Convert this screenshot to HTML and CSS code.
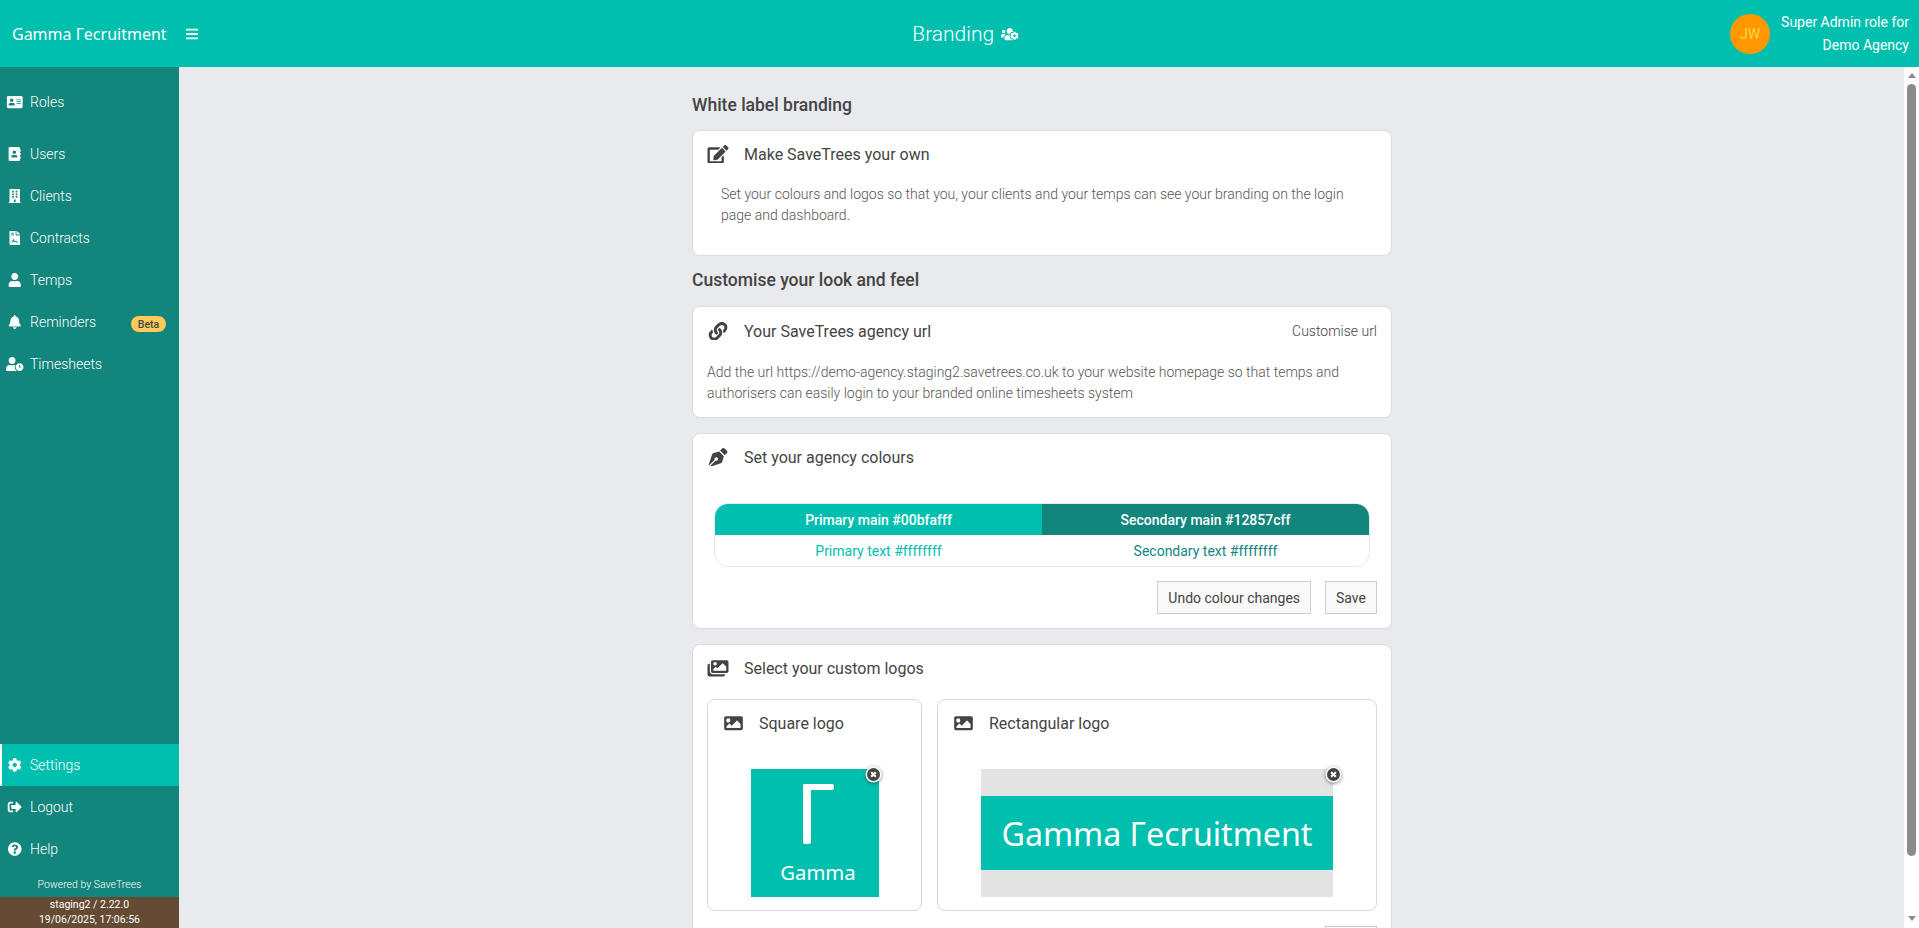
FILE: index.html
```html
<!DOCTYPE html>
<html lang="en">
<head>
    <meta charset="UTF-8">
    <meta name="viewport" content="width=device-width, initial-scale=1.0">
    <title>Branding</title>
    <link rel="stylesheet" href="styles.css">
</head>
<body>
    <svg class="defs" width="0" height="0">
        <symbol id="i-image" viewBox="0 0 512 512"><path d="M464 448H48c-26.510 0-48-21.490-48-48V112c0-26.510 21.490-48 48-48h416c26.510 0 48 21.490 48 48v288c0 26.510-21.490 48-48 48zM112 120c-30.928 0-56 25.072-56 56s25.072 56 56 56 56-25.072 56-56-25.072-56-56-56zM64 384h384V272l-87.515-87.515c-4.686-4.686-12.284-4.686-16.971 0L208 320l-55.515-55.515c-4.686-4.686-12.284-4.686-16.971 0L64 336v48z"/></symbol>
    </svg>

    <header class="topbar">
        <div class="brand">
            <span class="brand-name">Gamma Гecruitment</span>
            <svg class="burger" viewBox="0 0 448 512"><path d="M16 132h416c8.837 0 16-7.163 16-16V76c0-8.837-7.163-16-16-16H16C7.163 60 0 67.163 0 76v40c0 8.837 7.163 16 16 16zm0 160h416c8.837 0 16-7.163 16-16v-40c0-8.837-7.163-16-16-16H16c-8.837 0-16 7.163-16 16v40c0 8.837 7.163 16 16 16zm0 160h416c8.837 0 16-7.163 16-16v-40c0-8.837-7.163-16-16-16H16c-8.837 0-16 7.163-16 16v40c0 8.837 7.163 16 16 16z"/></svg>
        </div>
        <div class="page-title">
            Branding
            <svg class="title-icon" viewBox="0 0 640 512"><path d="M610.500 341.300c2.600-14.100 2.600-28.500 0-42.600l25.800-14.900c3-1.700 4.300-5.200 3.300-8.500-6.700-21.500-18.200-41-33.200-57.400-2.300-2.500-6-3.100-9-1.400l-25.800 14.900c-10.900-9.300-23.400-16.500-36.900-21.300v-29.800c0-3.400-2.400-6.400-5.700-7.100-22.300-5-45-4.800-66.200 0-3.300.7-5.700 3.700-5.700 7.100v29.800c-13.500 4.800-26 12-36.900 21.300l-25.800-14.900c-2.900-1.700-6.700-1.100-9 1.400-15 16.400-26.500 35.900-33.200 57.400-1 3.300.4 6.800 3.300 8.500l25.800 14.900c-2.600 14.100-2.600 28.500 0 42.600l-25.800 14.900c-3 1.700-4.300 5.200-3.300 8.500 6.700 21.500 18.200 40.900 33.200 57.400 2.300 2.500 6 3.100 9 1.400l25.800-14.900c10.900 9.300 23.400 16.500 36.900 21.300v29.800c0 3.400 2.400 6.400 5.700 7.100 22.300 5 45 4.800 66.200 0 3.300-.7 5.700-3.700 5.700-7.100v-29.800c13.500-4.800 26-12 36.900-21.300l25.800 14.900c2.900 1.700 6.700 1.100 9-1.400 15-16.400 26.500-35.900 33.200-57.400 1-3.300-.4-6.800-3.300-8.500l-25.800-14.900zM496 368.500c-26.800 0-48.500-21.800-48.500-48.500s21.800-48.500 48.500-48.500 48.500 21.800 48.500 48.500-21.700 48.500-48.500 48.500zM96 224c35.300 0 64-28.700 64-64s-28.700-64-64-64-64 28.700-64 64 28.700 64 64 64zm224 32c1.900 0 3.700-.5 5.600-.6 8.300-21.700 20.500-42.100 36.300-59.200 7.400-8 17.900-12.600 28.900-12.600 6.900 0 13.700 1.800 19.600 5.300l7.900 4.600c.8-.5 1.600-.9 2.400-1.400 7-14.600 11.200-30.800 11.200-48 0-61.900-50.100-112-112-112S208 82.100 208 144c0 61.900 50.100 112 112 112zm105.200 194.500c-2.300-1.200-4.600-2.600-6.800-3.900-8.200 4.800-15.300 9.800-27.500 9.800-10.900 0-21.400-4.600-28.900-12.600-18.300-19.800-32.300-43.900-40.200-69.600-10.700-34.500 24.900-49.700 25.800-50.300-.1-2.600-.1-5.200 0-7.800l-7.900-4.600c-3.800-2.200-7-5-9.800-8.100-3.300.2-6.500.6-9.800.6-24.600 0-47.600-6-68.500-16h-8.300C179.600 288 128 339.600 128 403.200V432c0 26.500 21.500 48 48 48h255.400c-3.700-6-6.200-12.800-6.200-20.300v-9.200zM173.100 274.600C161.500 263.100 145.600 256 128 256H64c-35.300 0-64 28.700-64 64v32c0 17.700 14.300 32 32 32h65.900c6.300-47.400 34.900-87.300 75.200-109.400z"/></svg>
        </div>
        <div class="account">
            <div class="avatar">JW</div>
            <div class="account-text">
                <div>Super Admin role for</div>
                <div>Demo Agency</div>
            </div>
        </div>
    </header>

    <div class="layout">
        <nav class="sidebar">
            <ul class="nav-top">
                <li class="nav-roles">
                    <svg class="nav-icon" viewBox="0 0 576 512"><path d="M528 32H48C21.500 32 0 53.500 0 80v352c0 26.500 21.500 48 48 48h480c26.500 0 48-21.500 48-48V80c0-26.500-21.500-48-48-48zm-352 96c35.300 0 64 28.700 64 64s-28.700 64-64 64-64-28.700-64-64 28.700-64 64-64zm112 236.800c0 10.600-10 19.200-22.400 19.200H86.400C74 384 64 375.400 64 364.800v-19.200c0-31.800 30.100-57.600 67.200-57.600h5c12.300 5.100 25.700 8 39.800 8s27.600-2.900 39.800-8h5c37.100 0 67.200 25.800 67.200 57.600v19.200zM512 312c0 4.400-3.600 8-8 8H360c-4.400 0-8-3.600-8-8v-16c0-4.400 3.600-8 8-8h144c4.400 0 8 3.600 8 8v16zm0-64c0 4.400-3.600 8-8 8H360c-4.400 0-8-3.600-8-8v-16c0-4.400 3.600-8 8-8h144c4.400 0 8 3.600 8 8v16zm0-64c0 4.400-3.600 8-8 8H360c-4.400 0-8-3.600-8-8v-16c0-4.400 3.600-8 8-8h144c4.400 0 8 3.600 8 8v16z"/></svg>
                    Roles
                </li>
                <li>
                    <svg class="nav-icon" viewBox="0 0 448 512"><path d="M436 160c6.600 0 12-5.400 12-12v-40c0-6.600-5.400-12-12-12h-20V48c0-26.500-21.500-48-48-48H48C21.500 0 0 21.500 0 48v416c0 26.500 21.500 48 48 48h320c26.500 0 48-21.500 48-48v-48h20c6.600 0 12-5.400 12-12v-40c0-6.600-5.400-12-12-12h-20v-64h20c6.600 0 12-5.400 12-12v-40c0-6.600-5.400-12-12-12h-20v-64h20zm-228-32c35.300 0 64 28.700 64 64s-28.700 64-64 64-64-28.700-64-64 28.700-64 64-64zm112 236.800c0 10.600-10 19.200-22.400 19.200H118.400C106 384 96 375.400 96 364.800v-19.200c0-31.800 30.100-57.600 67.200-57.600h5c12.300 5.100 25.700 8 39.800 8s27.600-2.900 39.800-8h5c37.100 0 67.200 25.800 67.200 57.600v19.200z"/></svg>
                    Users
                </li>
                <li>
                    <svg class="nav-icon" viewBox="0 0 448 512"><path d="M436 480h-20V24c0-13.255-10.745-24-24-24H56C42.745 0 32 10.745 32 24v456H12c-6.627 0-12 5.373-12 12v20h448v-20c0-6.627-5.373-12-12-12zM128 76c0-6.627 5.373-12 12-12h40c6.627 0 12 5.373 12 12v40c0 6.627-5.373 12-12 12h-40c-6.627 0-12-5.373-12-12V76zm0 96c0-6.627 5.373-12 12-12h40c6.627 0 12 5.373 12 12v40c0 6.627-5.373 12-12 12h-40c-6.627 0-12-5.373-12-12v-40zm52 148h-40c-6.627 0-12-5.373-12-12v-40c0-6.627 5.373-12 12-12h40c6.627 0 12 5.373 12 12v40c0 6.627-5.373 12-12 12zm76 160h-64v-84c0-6.627 5.373-12 12-12h40c6.627 0 12 5.373 12 12v84zm64-172c0 6.627-5.373 12-12 12h-40c-6.627 0-12-5.373-12-12v-40c0-6.627 5.373-12 12-12h40c6.627 0 12 5.373 12 12v40zm0-96c0 6.627-5.373 12-12 12h-40c-6.627 0-12-5.373-12-12v-40c0-6.627 5.373-12 12-12h40c6.627 0 12 5.373 12 12v40zm0-96c0 6.627-5.373 12-12 12h-40c-6.627 0-12-5.373-12-12V76c0-6.627 5.373-12 12-12h40c6.627 0 12 5.373 12 12v40z"/></svg>
                    Clients
                </li>
                <li>
                    <svg class="nav-icon" viewBox="0 0 384 512"><path d="M224 136V0H24C10.700 0 0 10.700 0 24v464c0 13.300 10.700 24 24 24h336c13.300 0 24-10.700 24-24V160H248c-13.200 0-24-10.800-24-24zM64 72c0-4.420 3.580-8 8-8h80c4.420 0 8 3.580 8 8v16c0 4.420-3.580 8-8 8H72c-4.420 0-8-3.580-8-8V72zm0 64c0-4.420 3.580-8 8-8h80c4.420 0 8 3.580 8 8v16c0 4.420-3.580 8-8 8H72c-4.420 0-8-3.580-8-8v-16zm192.810 248H304c8.840 0 16 7.160 16 16s-7.160 16-16 16h-47.190c-16.450 0-31.270-9.140-38.620-23.880-2.950-5.920-8.090-6.520-10.190-6.520s-7.240.590-10.050 6.220l-7.670 15.340a15.990 15.990 0 0 1-14.310 8.840c-.38 0-.75-.020-1.120-.050-6.450-.45-12-4.750-14.030-10.890L144 354.590l-10.610 31.880c-5.890 17.660-22.380 29.530-41 29.530H80c-8.840 0-16-7.160-16-16s7.160-16 16-16h12.390c4.830 0 9.110-3.080 10.640-7.660l18.190-54.640c3.300-9.810 12.440-16.410 22.780-16.410s19.480 6.590 22.770 16.410l13.880 41.640c19.770-16.190 54.050-9.700 66 14.160 2.020 4.060 5.970 6.500 10.160 6.500zM377 105L279.100 7c-4.500-4.500-10.600-7-17-7H256v128h128v-6.100c0-6.300-2.500-12.400-7-16.900z"/></svg>
                    Contracts
                </li>
                <li>
                    <svg class="nav-icon" viewBox="0 0 448 512"><path d="M224 256c70.700 0 128-57.300 128-128S294.700 0 224 0 96 57.300 96 128s57.300 128 128 128zm89.600 32h-16.700c-22.200 10.200-46.900 16-72.900 16s-50.600-5.800-72.900-16h-16.700C60.200 288 0 348.200 0 422.400V464c0 26.500 21.500 48 48 48h352c26.500 0 48-21.500 48-48v-41.600c0-74.200-60.200-134.400-134.400-134.400z"/></svg>
                    Temps
                </li>
                <li>
                    <svg class="nav-icon" viewBox="0 0 448 512"><path d="M224 512c35.320 0 63.970-28.650 63.970-64H160.030c0 35.350 28.650 64 63.970 64zm215.390-149.710c-19.320-20.760-55.470-51.990-55.470-154.290 0-77.700-54.480-139.900-127.940-155.160V32c0-17.670-14.320-32-31.980-32s-31.980 14.330-31.980 32v20.840C118.560 68.100 64.080 130.300 64.080 208c0 102.300-36.150 133.530-55.470 154.290-6 6.450-8.660 14.160-8.610 21.710.11 16.400 12.980 32 32.100 32h383.800c19.120 0 32-15.600 32.100-32 .05-7.550-2.610-15.270-8.610-21.710z"/></svg>
                    Reminders
                    <span class="beta">Beta</span>
                </li>
                <li>
                    <svg class="nav-icon" viewBox="0 0 640 512"><path d="M496 224c-79.600 0-144 64.400-144 144s64.400 144 144 144 144-64.400 144-144-64.400-144-144-144zm64 150.300c0 5.300-4.400 9.700-9.700 9.700h-60.600c-5.300 0-9.700-4.400-9.700-9.700v-76.600c0-5.300 4.400-9.700 9.700-9.700h12.600c5.300 0 9.700 4.400 9.700 9.700V352h38.300c5.300 0 9.700 4.400 9.700 9.700v12.600zM320 368c0-27.800 7.700-53.800 20.900-76.100-8-2.200-16.300-3.900-24.900-3.900h-16.700c-22.200 10.200-46.900 16-72.900 16s-50.600-5.800-72.900-16h-16.700C60.200 288 0 348.200 0 422.400V464c0 26.500 21.500 48 48 48h347.100c-45.300-31.900-75.100-84.400-75.100-144zm-96-112c70.700 0 128-57.300 128-128S294.700 0 224 0 96 57.300 96 128s57.300 128 128 128z"/></svg>
                    Timesheets
                </li>
            </ul>
            <ul class="nav-bottom">
                <li class="active">
                    <svg class="nav-icon" viewBox="0 0 512 512"><path d="M487.400 315.700l-42.600-24.600c4.300-23.200 4.300-47 0-70.200l42.600-24.600c4.900-2.800 7.100-8.600 5.500-14-11.100-35.600-30-67.800-54.700-94.600-3.800-4.100-10-5.100-14.800-2.300L380.800 110c-17.900-15.400-38.500-27.300-60.800-35.100V25.800c0-5.600-3.900-10.500-9.400-11.700-36.700-8.200-74.300-7.800-109.200 0-5.500 1.200-9.400 6.100-9.400 11.700V75c-22.200 7.900-42.800 19.800-60.800 35.100L88.700 85.500c-4.900-2.800-11-1.900-14.800 2.300-24.700 26.700-43.600 58.900-54.700 94.600-1.700 5.400.6 11.200 5.500 14L67.300 221c-4.300 23.200-4.300 47 0 70.200l-42.600 24.600c-4.900 2.800-7.100 8.600-5.500 14 11.100 35.600 30 67.800 54.700 94.600 3.800 4.100 10 5.100 14.800 2.300l42.600-24.600c17.900 15.400 38.500 27.300 60.800 35.100v49.200c0 5.600 3.900 10.500 9.400 11.700 36.700 8.200 74.300 7.800 109.200 0 5.500-1.200 9.400-6.100 9.400-11.700v-49.200c22.200-7.900 42.800-19.800 60.800-35.100l42.600 24.600c4.900 2.800 11 1.900 14.800-2.300 24.700-26.700 43.600-58.900 54.700-94.600 1.500-5.500-.7-11.300-5.600-14.100zM256 336c-44.100 0-80-35.900-80-80s35.900-80 80-80 80 35.900 80 80-35.900 80-80 80z"/></svg>
                    Settings
                </li>
                <li>
                    <svg class="nav-icon" viewBox="0 0 512 512"><path d="M497 273L329 441c-15 15-41 4.500-41-17v-96H152c-13.300 0-24-10.700-24-24v-96c0-13.300 10.700-24 24-24h136V88c0-21.400 25.900-32 41-17l168 168c9.300 9.400 9.300 24.600 0 34zM192 436v-40c0-6.600-5.400-12-12-12H96c-17.700 0-32-14.300-32-32V160c0-17.700 14.300-32 32-32h84c6.600 0 12-5.400 12-12V76c0-6.600-5.400-12-12-12H96c-53 0-96 43-96 96v192c0 53 43 96 96 96h84c6.600 0 12-5.400 12-12z"/></svg>
                    Logout
                </li>
                <li>
                    <svg class="nav-icon" viewBox="0 0 512 512"><path d="M504 256c0 136.997-111.043 248-248 248S8 392.997 8 256C8 119.083 119.043 8 256 8s248 111.083 248 248zM262.655 90c-54.497 0-89.255 22.957-116.549 63.758-3.536 5.286-2.353 12.415 2.715 16.258l34.699 26.310c5.205 3.947 12.621 3.008 16.665-2.122 17.864-22.658 30.113-35.797 57.303-35.797 20.429 0 45.698 13.148 45.698 32.958 0 14.976-12.363 22.667-32.534 33.976C247.128 238.528 216 254.941 216 296v4c0 6.627 5.373 12 12 12h56c6.627 0 12-5.373 12-12v-1.333c0-28.462 83.186-29.647 83.186-106.667 0-58.002-60.165-102-116.531-102zM256 338c-25.365 0-46 20.635-46 46 0 25.364 20.635 46 46 46s46-20.636 46-46c0-25.365-20.635-46-46-46z"/></svg>
                    Help
                </li>
            </ul>
            <div class="powered">Powered by SaveTrees</div>
            <div class="build">
                <div>staging2 / 2.22.0</div>
                <div>19/06/2025, 17:06:56</div>
            </div>
        </nav>

        <main class="content">
            <div class="column">
                <h2 class="section-title first">White label branding</h2>
                <section class="card card-intro">
                    <div class="card-head">
                        <svg class="card-icon" viewBox="0 0 576 512"><path d="M402.600 83.200l90.200 90.200c3.800 3.800 3.800 10 0 13.800L274.400 405.600l-92.800 10.300c-12.400 1.400-22.900-9.100-21.500-21.500l10.300-92.800L388.800 83.200c3.800-3.800 10-3.800 13.800 0zm162-22.900l-48.800-48.800c-15.200-15.200-39.900-15.200-55.200 0l-35.400 35.400c-3.800 3.800-3.800 10 0 13.800l90.200 90.200c3.800 3.800 10 3.800 13.800 0l35.400-35.400c15.200-15.300 15.200-40 0-55.200zM384 346.200V448H64V128h229.800c3.200 0 6.200-1.300 8.500-3.500l40-40c7.600-7.600 2.200-20.500-8.500-20.500H48C21.500 64 0 85.500 0 112v352c0 26.500 21.500 48 48 48h352c26.500 0 48-21.500 48-48V306.200c0-10.700-12.900-16-20.500-8.500l-40 40c-2.200 2.300-3.500 5.300-3.500 8.500z"/></svg>
                        <span class="card-title">Make SaveTrees your own</span>
                    </div>
                    <p class="card-text indent">Set your colours and logos so that you, your clients and your temps can see your branding on the login page and dashboard.</p>
                </section>

                <h2 class="section-title">Customise your look and feel</h2>
                <section class="card card-url">
                    <div class="card-head">
                        <svg class="card-icon" viewBox="0 0 512 512"><path d="M326.612 185.391c59.747 59.809 58.927 155.698.36 214.590-.11.120-.24.250-.36.370l-67.200 67.200c-59.270 59.270-155.699 59.262-214.960 0-59.270-59.260-59.270-155.700 0-214.960l37.106-37.106c9.840-9.840 26.786-3.300 27.294 10.606.648 17.722 3.826 35.527 9.690 52.721 1.986 5.822.567 12.262-3.783 16.612l-13.087 13.087c-28.026 28.026-28.905 73.660-1.155 101.960 28.024 28.579 74.086 28.749 102.325.510l67.200-67.190c28.191-28.191 28.073-73.757 0-101.830-3.701-3.694-7.429-6.564-10.341-8.569a16.037 16.037 0 0 1-6.947-12.606c-.396-10.567 3.348-21.456 11.698-29.806l21.054-21.055c5.521-5.521 14.182-6.199 20.584-1.731a152.482 152.482 0 0 1 20.522 17.197zM467.547 44.449c-59.261-59.262-155.690-59.270-214.960 0l-67.200 67.200c-.12.120-.25.250-.36.370-58.566 58.892-59.387 154.781.36 214.590a152.454 152.454 0 0 0 20.521 17.196c6.402 4.468 15.064 3.789 20.584-1.731l21.054-21.055c8.350-8.350 12.094-19.239 11.698-29.806a16.037 16.037 0 0 0-6.947-12.606c-2.912-2.005-6.640-4.875-10.341-8.569-28.073-28.073-28.191-73.639 0-101.830l67.200-67.190c28.239-28.239 74.300-28.069 102.325.510 27.750 28.300 26.872 73.934-1.155 101.960l-13.087 13.087c-4.350 4.350-5.769 10.790-3.783 16.612 5.864 17.194 9.042 34.999 9.690 52.721.509 13.906 17.454 20.446 27.294 10.606l37.106-37.106c59.271-59.259 59.271-155.699.001-214.959z"/></svg>
                        <span class="card-title">Your SaveTrees agency url</span>
                        <span class="card-action">Customise url</span>
                    </div>
                    <p class="card-text">Add the url https://demo-agency.staging2.savetrees.co.uk to your website homepage so that temps and authorisers can easily login to your branded online timesheets system</p>
                </section>

                <section class="card card-colours">
                    <div class="card-head">
                        <svg class="card-icon" viewBox="0 0 512 512"><path d="M136.600 138.790a64.003 64.003 0 0 0-43.310 41.350L0 460l14.690 14.690L164.800 324.580c-2.990-6.260-4.800-13.180-4.800-20.580 0-26.510 21.490-48 48-48s48 21.490 48 48-21.490 48-48 48c-7.400 0-14.320-1.810-20.580-4.800L37.310 497.310 52 512l279.860-93.290a64.003 64.003 0 0 0 41.350-43.310L416 224 288 96l-151.400 42.790zm361.340-64.620l-60.110-60.110c-18.750-18.750-49.160-18.750-67.910 0l-56.550 56.550 128.020 128.020 56.550-56.550c18.750-18.750 18.750-49.150 0-67.910z"/></svg>
                        <span class="card-title">Set your agency colours</span>
                    </div>
                    <div class="swatches">
                        <div class="swatch swatch-primary">Primary main #00bfafff</div>
                        <div class="swatch swatch-secondary">Secondary main #12857cff</div>
                        <div class="swatch-text text-primary">Primary text #ffffffff</div>
                        <div class="swatch-text text-secondary">Secondary text #ffffffff</div>
                    </div>
                    <div class="actions">
                        <button class="btn">Undo colour changes</button>
                        <button class="btn">Save</button>
                    </div>
                </section>

                <section class="card card-logos">
                    <div class="card-head">
                        <svg class="card-icon" viewBox="0 0 576 512"><path d="M480 416v16c0 26.510-21.490 48-48 48H48c-26.510 0-48-21.490-48-48V176c0-26.510 21.490-48 48-48h16v208c0 44.112 35.888 80 80 80h336zm96-80V80c0-26.510-21.490-48-48-48H144c-26.510 0-48 21.490-48 48v256c0 26.510 21.490 48 48 48h384c26.510 0 48-21.490 48-48zM256 128c0 26.510-21.490 48-48 48s-48-21.490-48-48 21.490-48 48-48 48 21.490 48 48zm-96 144l55.515-55.515c4.686-4.686 12.284-4.686 16.971 0L272 256l135.515-135.515c4.686-4.686 12.284-4.686 16.971 0L512 208v112H160v-48z"/></svg>
                        <span class="card-title">Select your custom logos</span>
                    </div>
                    <div class="logo-row">
                        <div class="logo-box logo-box-square">
                            <div class="card-head">
                                <svg class="card-icon"><use href="#i-image"/></svg>
                                <span class="card-title">Square logo</span>
                            </div>
                            <div class="logo-holder">
                                <div class="logo-square">
                                    <span class="gamma-mark"></span>
                                    <span class="gamma-word">Gamma</span>
                                </div>
                                <span class="remove"><svg viewBox="0 0 10 10"><path d="M3.200 3.200l3.600 3.600M6.800 3.200l-3.600 3.600"/></svg></span>
                            </div>
                        </div>
                        <div class="logo-box logo-box-rect">
                            <div class="card-head">
                                <svg class="card-icon"><use href="#i-image"/></svg>
                                <span class="card-title">Rectangular logo</span>
                            </div>
                            <div class="logo-holder">
                                <div class="logo-rect">
                                    <div class="logo-rect-band">Gamma Гecruitment</div>
                                </div>
                                <span class="remove"><svg viewBox="0 0 10 10"><path d="M3.200 3.200l3.600 3.600M6.800 3.200l-3.600 3.600"/></svg></span>
                            </div>
                        </div>
                    </div>
                    <div class="actions logo-actions">
                        <button class="btn">Save</button>
                    </div>
                </section>
            </div>
        </main>

        <div class="scrollbar">
            <span class="arrow-up"></span>
            <span class="thumb"></span>
            <span class="arrow-down"></span>
        </div>
    </div>
</body>
</html>
```

FILE: styles.css
```css
*{
    margin: 0;
    padding: 0;
    box-sizing: border-box;
}
ul{
    list-style: none;
}
html,body{
    height: 100%;
    overflow: hidden;
}
body{
    display: flex;
    flex-direction: column;
    font-family: Roboto, sans-serif;
    background-color: #e9eaee;
    color: #444;
}
.defs{
    position: absolute;
}

/* top bar */
.topbar{
    height: 67px;
    flex: none;
    display: grid;
    grid-template-columns: 1fr auto 1fr;
    align-items: center;
    background-color: #00bfaf;
    color: #fff;
}
.brand{
    display: flex;
    align-items: center;
    padding-left: 12px;
}
.brand-name{
    font-family: "Noto Sans", sans-serif;
    font-size: 16px;
    width: 174px;
}
.burger{
    width: 12.250px;
    height: 14px;
    fill: #fff;
}
.page-title{
    font-size: 21px;
    font-weight: 300;
    display: flex;
    align-items: center;
    gap: 7px;
    margin-left: 12px;
}
.title-icon{
    width: 17.500px;
    height: 14px;
    fill: #fff;
    margin-top: 1px;
}
.account{
    display: flex;
    align-items: center;
    justify-content: flex-end;
    padding-right: 10px;
}
.avatar{
    width: 40px;
    height: 40px;
    border-radius: 50%;
    background-color: #ff9800;
    color: #ffd740;
    font-size: 14px;
    display: flex;
    align-items: center;
    justify-content: center;
    margin-right: 11px;
}
.account-text{
    font-size: 14px;
    line-height: 23px;
    text-align: right;
}

/* layout */
.layout{
    flex: 1;
    display: flex;
    min-height: 0;
}
.sidebar{
    width: 179px;
    flex: none;
    display: flex;
    flex-direction: column;
    background-color: #12857c;
    color: #fff;
    font-size: 14px;
    font-weight: 300;
}
.sidebar li{
    height: 42px;
    display: flex;
    align-items: center;
    padding-left: 6px;
    position: relative;
}
.nav-top{
    flex: 1;
    padding-top: 14px;
}
.sidebar .nav-roles{
    margin-bottom: 10px;
}
.nav-icon{
    width: 17.500px;
    height: 14px;
    fill: #fff;
    margin-right: 6.500px;
    flex: none;
}
.beta{
    position: absolute;
    left: 131px;
    top: 15px;
    width: 35px;
    height: 16px;
    border-radius: 8px;
    background-color: #ffca58;
    color: #444;
    font-size: 10.500px;
    font-weight: 500;
    display: flex;
    align-items: center;
    justify-content: center;
}
.sidebar li.active{
    background-color: #00bfaf;
    border-left: 2px solid #fff;
    padding-left: 4px;
}
.powered{
    font-size: 10.500px;
    text-align: center;
    height: 24px;
    line-height: 24px;
    margin-top: 3px;
}
.build{
    background-color: #654b33;
    font-size: 10.500px;
    line-height: 15px;
    font-weight: 400;
    text-align: center;
    height: 31px;
}

/* content */
.content{
    flex: 1;
    min-width: 0;
    overflow: hidden;
    display: flex;
    justify-content: center;
}
.column{
    width: 700px;
    flex: none;
    margin-left: 1px;
}
.section-title{
    font-size: 17.500px;
    font-weight: 500;
    color: #444;
    line-height: 24px;
    margin-bottom: 14px;
}
.section-title.first{
    margin-top: 26px;
    margin-bottom: 13px;
}
.card{
    background-color: #fff;
    border: 1px solid #dcdcdc;
    border-radius: 8px;
    padding: 11px 14px 0;
    margin-bottom: 15px;
}
.card-head{
    display: flex;
    align-items: center;
    height: 24px;
}
.card-icon{
    width: 22px;
    height: 18.670px;
    fill: #444;
    margin-right: 15px;
    flex: none;
}
.card-title{
    font-size: 16px;
    color: #444;
    flex: none;
}
.card-action{
    margin-left: auto;
    font-size: 14px;
    font-weight: 300;
}
.card-text{
    font-size: 14px;
    font-weight: 300;
    line-height: 21px;
    color: #555;
    margin-top: 19px;
}
.card-text.indent{
    padding-left: 14px;
    margin-top: 18px;
}
.card-intro{
    height: 126px;
    margin-bottom: 12px;
}
.card-url{
    height: 112px;
    padding-top: 12px;
}
.card-colours{
    height: 196px;
}
.swatches{
    display: grid;
    grid-template-columns: 1fr 1fr;
    margin: 34px 7px 0;
    border: 1px solid #e8e8e8;
    border-radius: 14px;
    overflow: hidden;
    font-size: 14px;
}
.swatch{
    height: 31px;
    display: flex;
    align-items: center;
    justify-content: center;
    color: #fff;
    font-weight: 500;
}
.swatch-primary{
    background-color: #00bfaf;
}
.swatch-secondary{
    background-color: #12857c;
}
.swatch-text{
    height: 31px;
    display: flex;
    align-items: center;
    justify-content: center;
    font-weight: 400;
}
.text-primary{
    color: #00bfaf;
}
.text-secondary{
    color: #12857c;
}
.actions{
    display: flex;
    justify-content: flex-end;
    gap: 14px;
    margin-top: 14px;
}
.btn{
    height: 33px;
    padding: 0 10px;
    font-family: Roboto, sans-serif;
    font-size: 14px;
    color: #444;
    background-color: #f9f9f9;
    border: 1px solid #ccc;
}
.card-logos{
    margin-bottom: 0;
}
.logo-row{
    display: flex;
    gap: 15px;
    margin-top: 19px;
}
.logo-box{
    border: 1px solid #d8d8d8;
    border-radius: 8px;
    height: 212px;
    padding: 11px 16px 0;
}
.logo-box .card-icon{
    width: 19px;
    margin-right: 16px;
}
.logo-box-square{
    width: 215px;
}
.logo-box-rect{
    width: 440px;
}
.logo-holder{
    position: relative;
    width: fit-content;
    margin: 34px auto 0;
}
.logo-square{
    width: 128px;
    height: 128px;
    background-color: #00bfaf;
    color: #fff;
    position: relative;
    display: flex;
    justify-content: center;
    align-items: flex-end;
}
.gamma-mark{
    position: absolute;
    left: 52px;
    top: 15px;
    width: 31px;
    height: 60px;
}
.gamma-mark::before,
.gamma-mark::after{
    content: "";
    position: absolute;
    left: 0;
    top: 0;
    background-color: #fff;
    border-radius: 2px;
}
.gamma-mark::before{
    width: 8px;
    height: 60px;
}
.gamma-mark::after{
    width: 31px;
    height: 6px;
}
.gamma-word{
    font-family: "Noto Sans", sans-serif;
    font-size: 20.300px;
    margin-bottom: 11px;
    margin-left: 7px;
}
.logo-rect{
    width: 352px;
    height: 128px;
    background-color: #e4e4e4;
    display: flex;
    align-items: center;
}
.logo-rect-band{
    width: 100%;
    height: 74px;
    background-color: #00bfaf;
    color: #fff;
    font-family: "Noto Sans", sans-serif;
    font-size: 32.200px;
    display: flex;
    align-items: center;
    justify-content: center;
}
.remove{
    position: absolute;
    top: -1px;
    right: -1px;
    width: 13px;
    height: 13px;
    border-radius: 50%;
    background-color: #444;
    box-shadow: 0 0 0 1.500px #fff, 0 1px 4px 1px rgba(0,0,0,.6);
    display: flex;
}
.logo-box-rect .remove{
    right: -7px;
}
.remove svg{
    stroke: #fff;
    stroke-width: 1.600;
    fill: none;
}
.logo-actions{
    margin-top: 15px;
}

/* page scrollbar */
.scrollbar{
    width: 15px;
    flex: none;
    background-color: #fff;
    display: flex;
    flex-direction: column;
    align-items: center;
}
.thumb{
    width: 9px;
    margin-top: 6px;
    height: 772px;
    border-radius: 5px;
    background-color: #8b8b8b;
}
.arrow-up{
    margin-top: 6px;
    border: 4.500px solid transparent;
    border-top: 0;
    border-bottom: 5px solid #8b8b8b;
}
.arrow-down{
    margin-top: auto;
    margin-bottom: 7px;
    border: 4.500px solid transparent;
    border-bottom: 0;
    border-top: 5px solid #8b8b8b;
}
```
